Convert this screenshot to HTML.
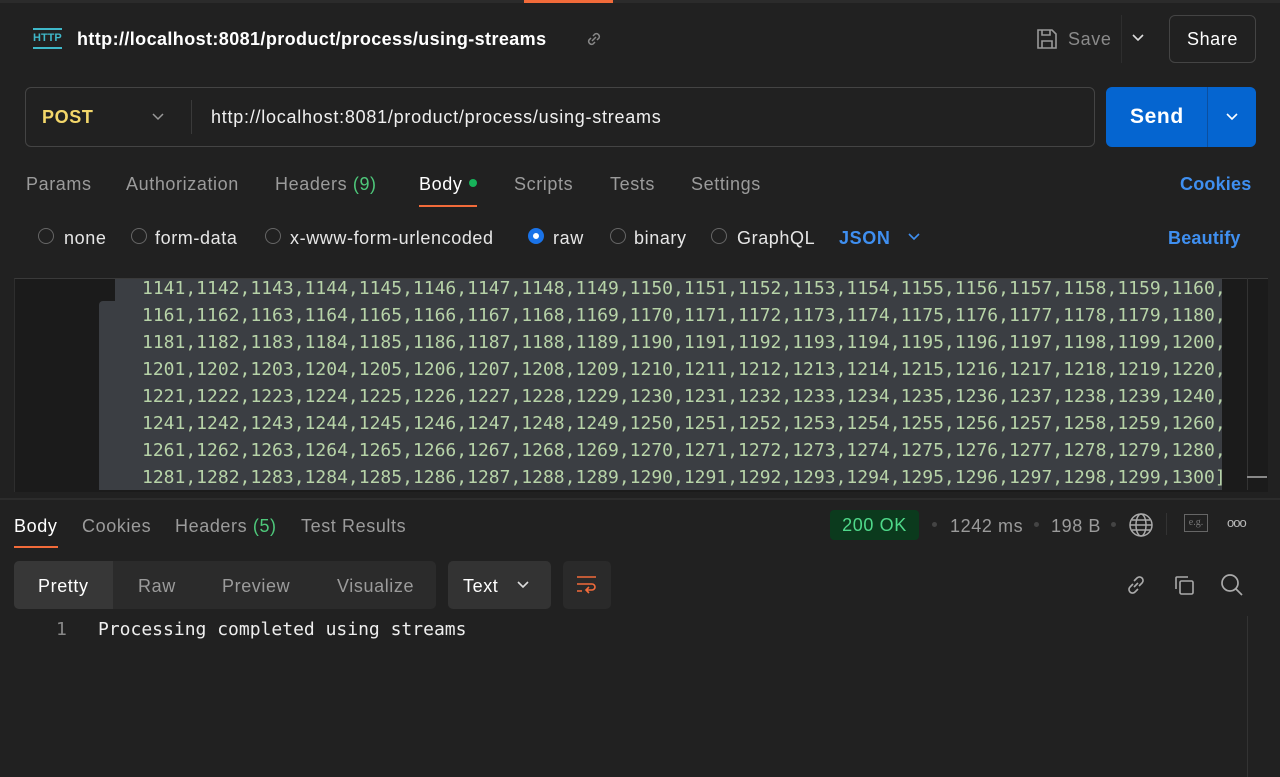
<!DOCTYPE html>
<html><head><meta charset="utf-8"><style>
*{margin:0;padding:0;box-sizing:border-box}
body{width:1280px;height:777px;background:#212121;font-family:"Liberation Sans",sans-serif;color:#e6e6e6;position:relative;overflow:hidden;font-size:18px;letter-spacing:0.6px}
.a{position:absolute;white-space:nowrap}
.mono{font-family:"DejaVu Sans Mono","Liberation Mono",monospace;letter-spacing:0}
.g{color:#9b9b9b}
.code{font-size:18px;color:#b7d3a8;line-height:27px}
</style></head><body>
<div class="a" style="left:0;top:0;width:1280px;height:3px;background:#2b2b2b"></div>
<div class="a" style="left:524px;top:0;width:89px;height:3px;background:#f26b3a"></div>
<!-- header -->
<div class="a" style="left:33px;top:28px;font-size:11px;color:#3fb8c9;font-weight:bold;border-top:2px solid #3fb8c9;border-bottom:2px solid #3fb8c9;line-height:13px;padding:2px 0;letter-spacing:0">HTTP</div>
<div class="a" style="left:77px;top:29px;font-weight:bold;color:#fff;font-size:18px;letter-spacing:0.4px">http://localhost:8081/product/process/using-streams</div>
<svg class="a" style="left:584px;top:29px" width="20" height="20" viewBox="0 0 20 20" fill="none" stroke="#888" stroke-width="1.5"><path d="M8 12l4-4M7 9l-2 2a3 3 0 004 4l2-2M13 11l2-2a3 3 0 00-4-4l-2 2"/></svg>
<svg class="a" style="left:1035px;top:27px" width="24" height="24" viewBox="0 0 24 24" fill="none" stroke="#999" stroke-width="1.6"><path d="M3 3h14l4 4v14H3z"/><path d="M7 3v5h8V3M7 21v-7h10v7"/></svg>
<div class="a g" style="left:1068px;top:29px;color:#8a8a8a">Save</div>
<div class="a" style="left:1121px;top:15px;width:1px;height:48px;background:#2e2e2e"></div>
<svg class="a" style="left:1131px;top:33px" width="14" height="10" viewBox="0 0 14 10"><path d="M2 2l5 5 5-5" stroke="#ddd" stroke-width="1.6" fill="none"/></svg>
<div class="a" style="left:1169px;top:15px;width:87px;height:48px;border:1px solid #444;border-radius:6px;text-align:center;line-height:46px;color:#fff">Share</div>
<!-- url bar -->
<div class="a" style="left:25px;top:87px;width:1070px;height:60px;border:1px solid #444;border-radius:6px"></div>
<div class="a" style="left:42px;top:107px;font-weight:bold;color:#f3d76a">POST</div>
<svg class="a" style="left:151px;top:112px" width="14" height="10" viewBox="0 0 14 10"><path d="M2 2l5 5 5-5" stroke="#999" stroke-width="1.5" fill="none"/></svg>
<div class="a" style="left:191px;top:100px;width:1px;height:34px;background:#3a3a3a"></div>
<div class="a" style="left:211px;top:107px;color:#f0f0f0;letter-spacing:0.75px">http://localhost:8081/product/process/using-streams</div>
<div class="a" style="left:1106px;top:87px;width:150px;height:60px;background:#0565d0;border-radius:6px"></div>
<div class="a" style="left:1207px;top:87px;width:1px;height:60px;background:#0b4fa0"></div>
<div class="a" style="left:1130px;top:105px;font-weight:bold;color:#fff;font-size:21px">Send</div>
<svg class="a" style="left:1225px;top:112px" width="14" height="10" viewBox="0 0 14 10"><path d="M2 2l5 5 5-5" stroke="#fff" stroke-width="1.6" fill="none"/></svg>
<!-- tabs -->
<div class="a g" style="left:26px;top:174px">Params</div>
<div class="a g" style="left:126px;top:174px">Authorization</div>
<div class="a g" style="left:275px;top:174px">Headers <span style="color:#4ec77a">(9)</span></div>
<div class="a" style="left:419px;top:174px;color:#fff">Body</div>
<div class="a" style="left:469px;top:179px;width:8px;height:8px;border-radius:50%;background:#17b35a"></div>
<div class="a" style="left:419px;top:205px;width:58px;height:2px;background:#f26b3a"></div>
<div class="a g" style="left:514px;top:174px">Scripts</div>
<div class="a g" style="left:610px;top:174px">Tests</div>
<div class="a g" style="left:691px;top:174px">Settings</div>
<div class="a" style="left:1180px;top:174px;color:#3f8ff0;font-weight:bold;letter-spacing:0.2px">Cookies</div>
<!-- radios -->
<div class="a" style="left:38px;top:228px;width:16px;height:16px;border:1px solid #666;border-radius:50%"></div>
<div class="a" style="left:64px;top:228px">none</div>
<div class="a" style="left:131px;top:228px;width:16px;height:16px;border:1px solid #666;border-radius:50%"></div>
<div class="a" style="left:155px;top:228px">form-data</div>
<div class="a" style="left:265px;top:228px;width:16px;height:16px;border:1px solid #666;border-radius:50%"></div>
<div class="a" style="left:290px;top:228px">x-www-form-urlencoded</div>
<div class="a" style="left:528px;top:228px;width:16px;height:16px;border:5px solid #1a73e8;background:#fff;border-radius:50%"></div>
<div class="a" style="left:553px;top:228px">raw</div>
<div class="a" style="left:610px;top:228px;width:16px;height:16px;border:1px solid #666;border-radius:50%"></div>
<div class="a" style="left:634px;top:228px">binary</div>
<div class="a" style="left:711px;top:228px;width:16px;height:16px;border:1px solid #666;border-radius:50%"></div>
<div class="a" style="left:737px;top:228px">GraphQL</div>
<div class="a" style="left:839px;top:228px;color:#3f8ff0;font-weight:bold">JSON</div>
<svg class="a" style="left:907px;top:232px" width="14" height="10" viewBox="0 0 14 10"><path d="M2 2l5 5 5-5" stroke="#3f8ff0" stroke-width="1.6" fill="none"/></svg>
<div class="a" style="left:1168px;top:228px;color:#3f8ff0;font-weight:bold;letter-spacing:0.2px">Beautify</div>
<!-- editor -->
<div class="a" style="left:14px;top:278px;width:1254px;height:214px;background:#1b1b1b;border-top:1px solid #3a3a3a;border-left:1px solid #2e2e2e"></div>
<div class="a" style="left:115px;top:279px;width:1107px;height:24px;background:#3b3e43"></div>
<div class="a" style="left:99px;top:301px;width:1123px;height:189px;background:#3b3e43;border-radius:4px 0 0 0"></div>
<div class="a" style="left:1247px;top:278px;width:1px;height:212px;background:#333"></div>
<div class="a" style="left:1247px;top:476px;width:20px;height:2px;background:#888"></div>
<div class="a mono code" style="left:142px;top:275px">1141,1142,1143,1144,1145,1146,1147,1148,1149,1150,1151,1152,1153,1154,1155,1156,1157,1158,1159,1160,<br>1161,1162,1163,1164,1165,1166,1167,1168,1169,1170,1171,1172,1173,1174,1175,1176,1177,1178,1179,1180,<br>1181,1182,1183,1184,1185,1186,1187,1188,1189,1190,1191,1192,1193,1194,1195,1196,1197,1198,1199,1200,<br>1201,1202,1203,1204,1205,1206,1207,1208,1209,1210,1211,1212,1213,1214,1215,1216,1217,1218,1219,1220,<br>1221,1222,1223,1224,1225,1226,1227,1228,1229,1230,1231,1232,1233,1234,1235,1236,1237,1238,1239,1240,<br>1241,1242,1243,1244,1245,1246,1247,1248,1249,1250,1251,1252,1253,1254,1255,1256,1257,1258,1259,1260,<br>1261,1262,1263,1264,1265,1266,1267,1268,1269,1270,1271,1272,1273,1274,1275,1276,1277,1278,1279,1280,<br>1281,1282,1283,1284,1285,1286,1287,1288,1289,1290,1291,1292,1293,1294,1295,1296,1297,1298,1299,1300]</div>
<div class="a" style="left:0;top:498px;width:1280px;height:2px;background:#2c2c2c"></div>
<!-- response -->
<div class="a" style="left:14px;top:516px;color:#fff">Body</div>
<div class="a" style="left:14px;top:546px;width:44px;height:2px;background:#f26b3a"></div>
<div class="a g" style="left:82px;top:516px">Cookies</div>
<div class="a g" style="left:175px;top:516px">Headers <span style="color:#4ec77a">(5)</span></div>
<div class="a g" style="left:301px;top:516px">Test Results</div>
<div class="a" style="left:830px;top:510px;width:89px;height:30px;background:#0b3a1d;border-radius:4px;color:#4fd98a;text-align:center;line-height:30px">200 OK</div>
<div class="a" style="left:932px;top:522px;width:5px;height:5px;border-radius:50%;background:#444"></div>
<div class="a g" style="left:950px;top:516px">1242 ms</div>
<div class="a" style="left:1034px;top:522px;width:5px;height:5px;border-radius:50%;background:#444"></div>
<div class="a g" style="left:1051px;top:516px">198 B</div>
<div class="a" style="left:1111px;top:522px;width:5px;height:5px;border-radius:50%;background:#444"></div>
<svg class="a" style="left:1128px;top:512px" width="26" height="26" viewBox="0 0 26 26" fill="none" stroke="#aaa" stroke-width="1.5"><circle cx="13" cy="13" r="11"/><ellipse cx="13" cy="13" rx="5" ry="11"/><path d="M2 13h22M4 8h18M4 18h18"/></svg>
<div class="a" style="left:1166px;top:513px;width:1px;height:22px;background:#333"></div>
<div class="a" style="left:1184px;top:514px;width:24px;height:18px;border:1px solid #666;font-size:10px;color:#777;text-align:center;line-height:15px;font-family:'Liberation Serif',serif;letter-spacing:0">e.g.</div>
<div class="a" style="left:1227px;top:515px;color:#bbb;font-size:13px;letter-spacing:-1px">ooo</div>
<div class="a" style="left:14px;top:561px;width:422px;height:48px;background:#2b2b2b;border-radius:5px"></div>
<div class="a" style="left:14px;top:561px;width:99px;height:48px;background:#373737;border-radius:5px 0 0 5px"></div>
<div class="a" style="left:38px;top:576px;color:#fff">Pretty</div>
<div class="a g" style="left:138px;top:576px">Raw</div>
<div class="a g" style="left:222px;top:576px">Preview</div>
<div class="a g" style="left:337px;top:576px">Visualize</div>
<div class="a" style="left:448px;top:561px;width:103px;height:48px;background:#333;border-radius:5px"></div>
<div class="a" style="left:463px;top:576px;color:#fff">Text</div>
<svg class="a" style="left:516px;top:580px" width="14" height="10" viewBox="0 0 14 10"><path d="M2 2l5 5 5-5" stroke="#ddd" stroke-width="1.6" fill="none"/></svg>
<div class="a" style="left:563px;top:561px;width:48px;height:48px;background:#2a2a2a;border-radius:5px"></div>
<svg class="a" style="left:575px;top:574px" width="24" height="22" viewBox="0 0 24 22" fill="none" stroke="#f26b3a" stroke-width="1.6"><path d="M2 3h19M2 10h15a3 3 0 010 6h-5M14 13l-3 3 3 3M2 17h5"/></svg>
<svg class="a" style="left:1124px;top:573px" width="24" height="24" viewBox="0 0 24 24" fill="none" stroke="#aaa" stroke-width="1.6"><path d="M10 14l4-4M9 11l-3 3a3.5 3.5 0 005 5l3-3M15 13l3-3a3.5 3.5 0 00-5-5l-3 3"/></svg>
<svg class="a" style="left:1172px;top:573px" width="24" height="24" viewBox="0 0 24 24" fill="none" stroke="#aaa" stroke-width="1.6"><rect x="8" y="8" width="13" height="13" rx="1.5"/><path d="M4 16V5a1 1 0 011-1h11"/></svg>
<svg class="a" style="left:1219px;top:572px" width="26" height="26" viewBox="0 0 26 26" fill="none" stroke="#aaa" stroke-width="1.7"><circle cx="11" cy="11" r="8"/><path d="M17 17l6 6"/></svg>
<div class="a mono" style="left:56px;top:619px;color:#888;font-size:18px">1</div>
<div class="a mono" style="left:98px;top:619px;color:#eee;font-size:18px">Processing completed using streams</div>
<div class="a" style="left:1247px;top:616px;width:1px;height:161px;background:#333"></div>
</body></html>
